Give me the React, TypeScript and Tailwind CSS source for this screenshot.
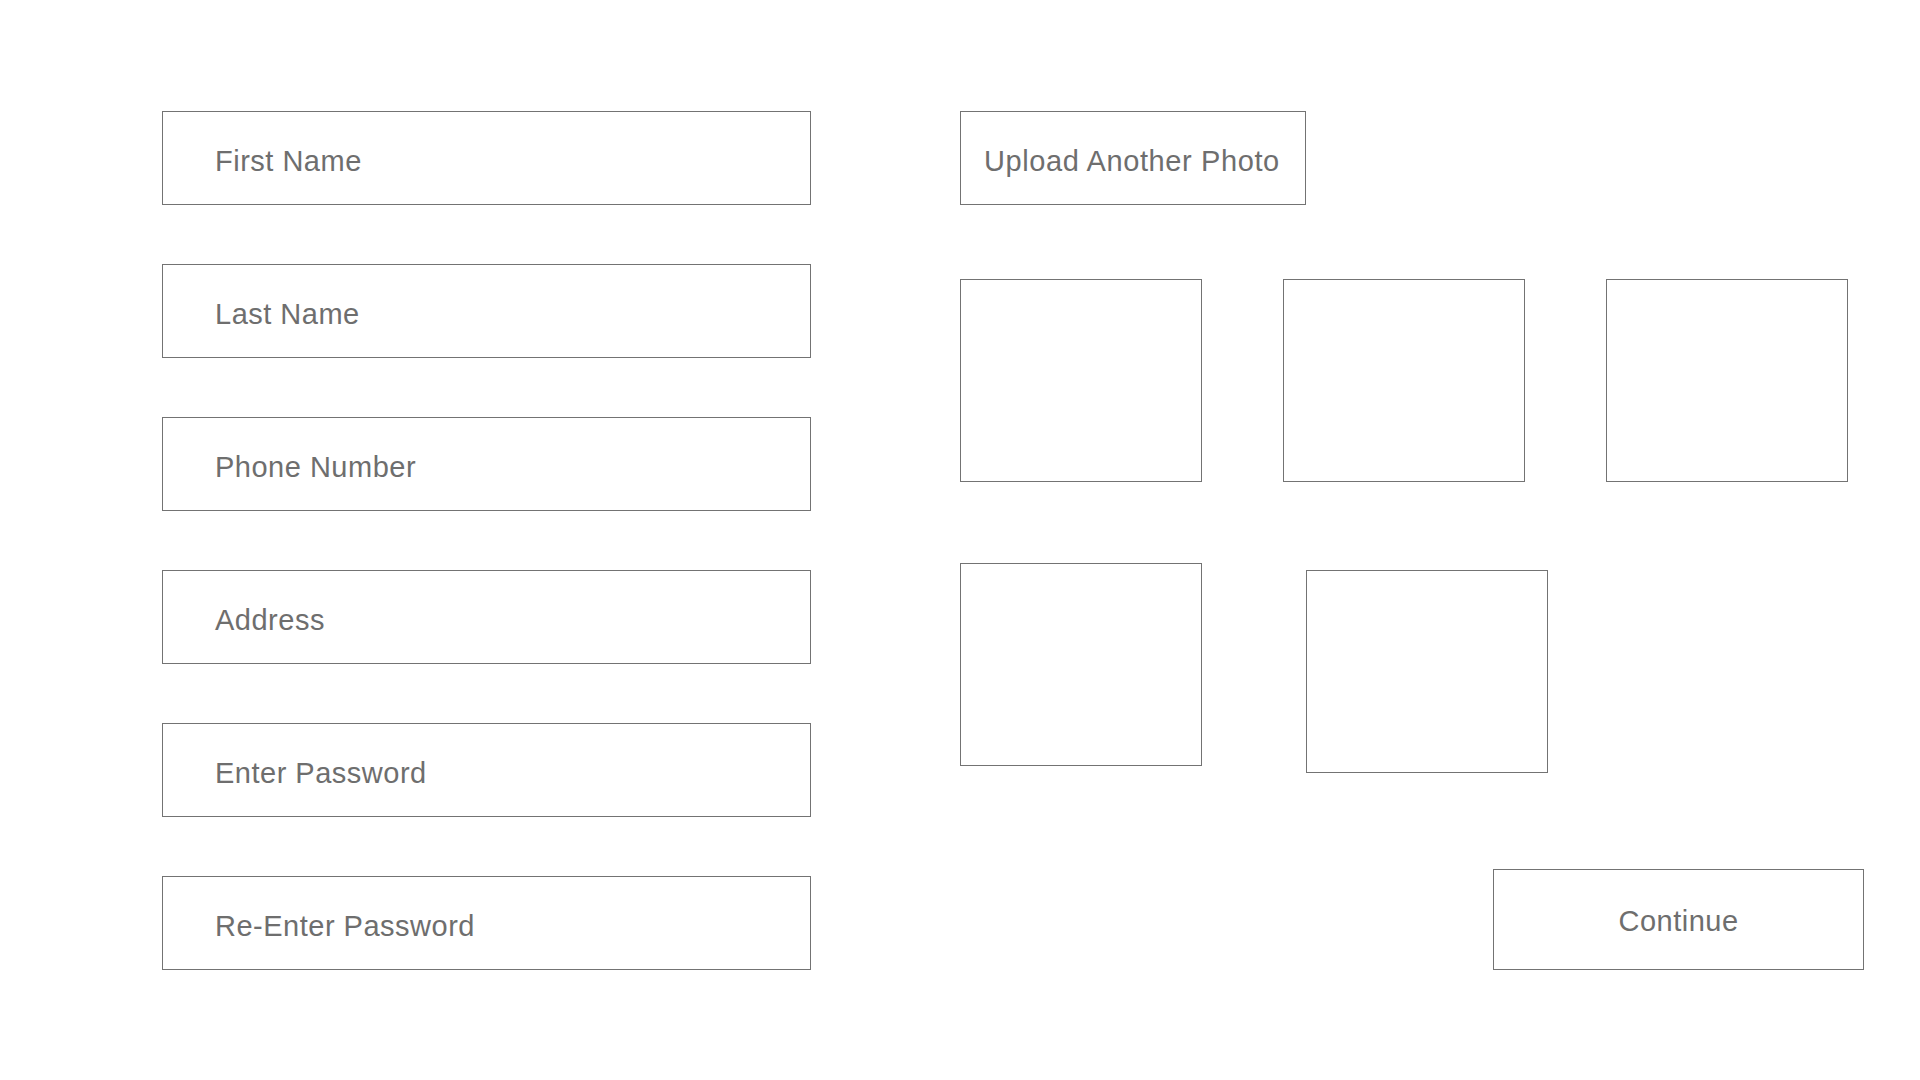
const fields = [
  "First Name",
  "Last Name",
  "Phone Number",
  "Address",
  "Enter Password",
  "Re-Enter Password",
];

function Field({ label }: { label: string }) {
  return (
    <div className="h-[94px] w-[649px] border border-[#737373] flex items-center pl-[52px] pt-[7px]">
      <span className="text-[29px] tracking-[0.5px] text-[#6e6e6e]">{label}</span>
    </div>
  );
}

function Photo({ className = "" }: { className?: string }) {
  return <div className={`w-[242px] h-[203px] border border-[#737373] ${className}`} />;
}

export default function App() {
  return (
    <div
      className="w-[1920px] h-[1080px] bg-white flex pl-[162px] pt-[111px]"
      style={{ fontFamily: '"Liberation Sans", Arial, sans-serif' }}
    >
      {/* Form fields */}
      <div className="flex flex-col gap-[59px]">
        {fields.map((f) => (
          <Field key={f} label={f} />
        ))}
      </div>

      {/* Photos */}
      <div className="ml-[149px] flex flex-col">
        <button className="h-[94px] w-[346px] border border-[#737373] flex items-center pl-[23px] pt-[7px] text-left">
          <span className="text-[29px] tracking-[0.6px] text-[#6e6e6e]">Upload Another Photo</span>
        </button>

        <div className="flex gap-[81px] mt-[74px]">
          <Photo />
          <Photo />
          <Photo />
        </div>

        <div className="flex items-start mt-[81px]">
          <Photo />
          <Photo className="ml-[104px] mt-[7px]" />
        </div>

        <button className="ml-[533px] mt-[96px] w-[371px] h-[101px] border border-[#737373] flex items-center justify-center pt-[4px]">
          <span className="text-[29px] tracking-[0.5px] text-[#6e6e6e]">Continue</span>
        </button>
      </div>
    </div>
  );
}
